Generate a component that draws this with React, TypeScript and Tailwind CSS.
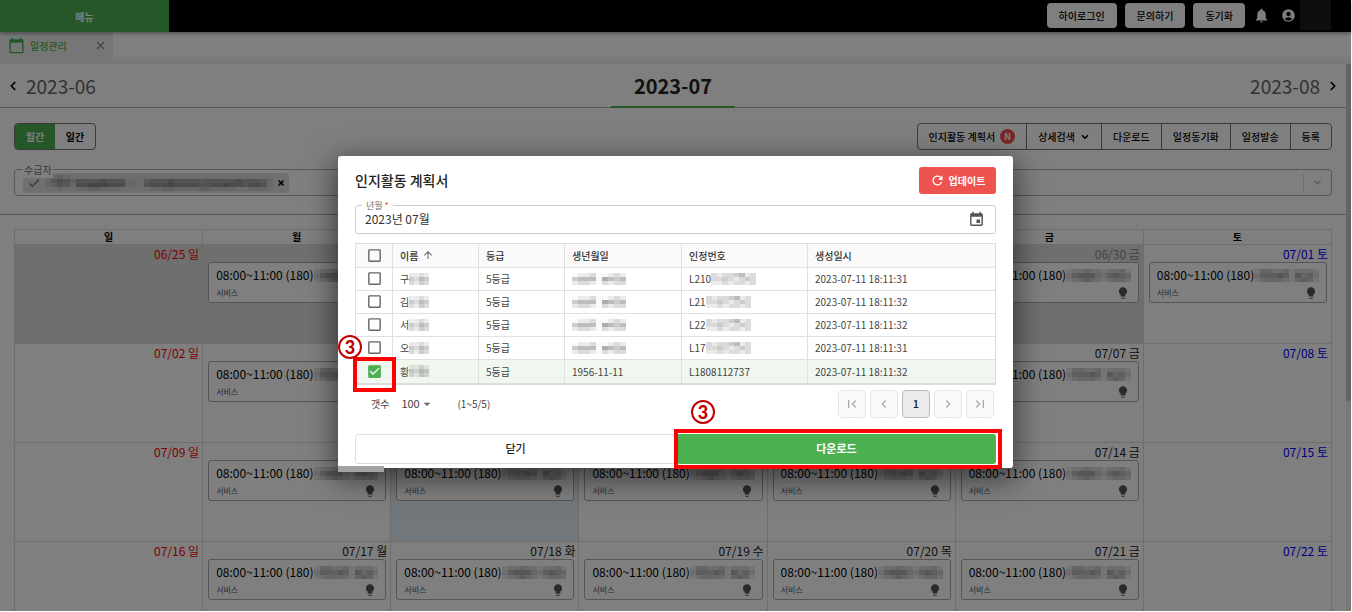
import React from 'react';
import clsx from 'clsx';
import { ChevronDown, ChevronLeft, ChevronRight, X } from 'lucide-react';
import {
  MdAccountCircle,
  MdArrowDropDown,
  MdArrowUpward,
  MdCalendarToday,
  MdCheck,
  MdCheckBox,
  MdCheckBoxOutlineBlank,
  MdChevronLeft,
  MdChevronRight,
  MdClose,
  MdEvent,
  MdFirstPage,
  MdLastPage,
  MdLightbulb,
  MdNotifications,
  MdRefresh,
} from 'react-icons/md';

interface DayCell {
  date: string;
  event?: boolean;
  outside?: boolean;
  today?: boolean;
}

interface PlanRow {
  name: string;
  birth?: string;
  number: string;
  masked: boolean;
  created: string;
  checked: boolean;
}

const WEEKDAYS = ['일', '월', '화', '수', '목', '금', '토'];

const WEEKS: DayCell[][] = [
  [
    { date: '06/25', outside: true },
    { date: '06/26', outside: true, event: true },
    { date: '06/27', outside: true },
    { date: '06/28', outside: true },
    { date: '06/29', outside: true },
    { date: '06/30', outside: true, event: true },
    { date: '07/01', event: true },
  ],
  [
    { date: '07/02' },
    { date: '07/03', event: true },
    { date: '07/04' },
    { date: '07/05' },
    { date: '07/06' },
    { date: '07/07', event: true },
    { date: '07/08' },
  ],
  [
    { date: '07/09' },
    { date: '07/10', event: true },
    { date: '07/11', event: true, today: true },
    { date: '07/12', event: true },
    { date: '07/13', event: true },
    { date: '07/14', event: true },
    { date: '07/15' },
  ],
  [
    { date: '07/16' },
    { date: '07/17', event: true },
    { date: '07/18', event: true },
    { date: '07/19', event: true },
    { date: '07/20', event: true },
    { date: '07/21', event: true },
    { date: '07/22' },
  ],
];

const ROWS: PlanRow[] = [
  { name: '구', number: 'L210', masked: true, created: '2023-07-11 18:11:31', checked: false },
  { name: '김', number: 'L21', masked: true, created: '2023-07-11 18:11:32', checked: false },
  { name: '서', number: 'L22', masked: true, created: '2023-07-11 18:11:32', checked: false },
  { name: '오', number: 'L17', masked: true, created: '2023-07-11 18:11:31', checked: false },
  { name: '황', birth: '1956-11-11', number: 'L1808112737', masked: false, created: '2023-07-11 18:11:32', checked: true },
];

// one digit per block, higher is darker
const MASKS = {
  eventA: ['12232212231', '24555324543', '12343212332'],
  eventB: ['13322312221', '24445415342', '12333213431'],
  recipient: [
    '0121000000000000000000000000000000000',
    '1354244445444110344454444344444544431',
    '1243155666555110455565555445565545541',
    '0010011221110000011221111221111001110',
  ],
  name: ['1121', '3243', '2132'],
  birth: ['011200121', '344405434', '122102122'],
  number: ['21223412', '22321232', '11212212'],
};

const Mosaic: React.FC<{ kind: keyof typeof MASKS; className: string }> = ({ kind, className }) => {
  const rows = MASKS[kind];
  return (
    <svg
      aria-hidden
      viewBox={`0 0 ${rows[0].length} ${rows.length}`}
      preserveAspectRatio="none"
      shapeRendering="crispEdges"
      className={className}
    >
      {rows.map((row, y) =>
        row.split('').map((v, x) => (
          <rect key={`${x}-${y}`} x={x} y={y} width="1" height="1" fillOpacity={0.02 + Number(v) * 0.06} />
        ))
      )}
    </svg>
  );
};

const Header = () => (
  <header className="relative z-10 flex h-8 shrink-0 items-center bg-black pb-px shadow-[0_2px_3px_rgba(0,0,0,0.3)]">
    <button className="h-8 w-[169px] self-start bg-[#4caf50] text-[10px] font-bold text-white">메뉴</button>
    <div className="ml-auto flex items-center gap-2">
      {['하이로그인', '문의하기', '동기화'].map(label => (
        <button key={label} className="h-[25px] rounded-sm bg-white px-3 text-[10px] font-medium text-black">
          {label}
        </button>
      ))}
    </div>
    <button aria-label="알림" className="ml-2 text-white"><MdNotifications size={17} /></button>
    <button aria-label="계정" className="ml-[11px] text-white"><MdAccountCircle size={15} /></button>
    <div className="mr-5 ml-1 h-[30px] w-[31px] self-start bg-[#1c1c1c]" />
  </header>
);

const TabBar = () => (
  <div className="flex h-8 shrink-0 bg-[#f2f2f2]">
    <div className="flex w-[113px] items-center bg-[#ececec] pb-[6px] pl-2 text-[#4caf50]">
      <MdCalendarToday size={17} />
      <span className="ml-[5px] text-[10px] font-medium">일정관리</span>
      <button aria-label="탭 닫기" className="mr-[6px] ml-auto text-[#777]"><MdClose size={13} /></button>
    </div>
    <div className="h-[25px] flex-1 bg-white" />
  </div>
);

const MonthNav = () => (
  <div className="grid h-11 grid-cols-3 border-b border-[#b0b0b0] text-[19px] leading-[44px] text-[#666]">
    <button className="flex items-center gap-[6px] pl-[6px]">
      <ChevronLeft size={14} strokeWidth={3} className="text-black" />
      2023-06
    </button>
    <div className="flex justify-center">
      <h1 className="h-11 w-[124px] border-b-2 border-[#4caf50] text-center text-[20px] font-bold text-[#222]">2023-07</h1>
    </div>
    <button className="flex items-center justify-end gap-[6px] pr-[6px]">
      2023-08
      <ChevronRight size={14} strokeWidth={3} className="text-black" />
    </button>
  </div>
);

const Toolbar = () => (
  <div className="flex h-[27px] justify-between text-[10px] font-medium text-black">
    <div className="flex rounded-sm border border-[#777]">
      <button className="w-10 bg-[#4caf50] font-bold text-white">월간</button>
      <button className="w-10 font-bold">일간</button>
    </div>
    <div className="flex divide-x divide-[#777] rounded-sm border border-[#777]">
      <button className="flex items-center gap-[5px] px-[11px]">
        인지활동 계획서
        <span className="size-[15px] rounded-full bg-[#ef5350] text-center text-[9px] leading-[15px] font-bold text-white">N</span>
      </button>
      <button className="flex items-center gap-[5px] px-[11px]">
        상세검색
        <ChevronDown size={10} strokeWidth={4} />
      </button>
      {['다운로드', '일정동기화', '일정발송', '등록'].map(label => (
        <button key={label} className="px-[11px]">{label}</button>
      ))}
    </div>
  </div>
);

const RecipientSelect = () => (
  <div className="relative mt-[19px] flex h-[27px] items-center rounded-sm border border-[#b0b0b0] pl-2">
    <span className="absolute -top-2 left-2 bg-white px-px text-[10px] leading-4 text-[#777]">수급자</span>
    <div className="flex h-5 w-[266px] items-center rounded-sm bg-[#e0e0e0] px-1">
      <MdCheck size={14} className="text-[#2e7d32]" />
      <Mosaic kind="recipient" className="ml-1 h-4 w-[228px]" />
      <button aria-label="삭제" className="ml-auto text-black"><X size={8} strokeWidth={5} /></button>
    </div>
    <button aria-label="수급자 선택" className="ml-auto flex h-[18px] items-center border-l border-[#ddd] px-2 text-[#aaa]">
      <ChevronDown size={11} strokeWidth={3} />
    </button>
  </div>
);

const EventCard: React.FC<{ kind: 'eventA' | 'eventB' }> = ({ kind }) => (
  <article className="mr-1 ml-[5px] h-[41px] rounded-[3px] border border-[#aaa] bg-white px-[7px] pt-[3px]">
    <div className="flex h-[18px] items-center text-[12px] whitespace-nowrap text-black">
      08:00~11:00 (180)
      <Mosaic kind={kind} className="h-[13px] min-w-0 flex-1" />
    </div>
    <div className="flex h-[17px] items-center justify-between pr-px text-[8px] text-[#405a72]">
      서비스
      <MdLightbulb size={14} className="text-[#555]" />
    </div>
  </article>
);

const Calendar = () => (
  <table className="mt-[14px] w-full table-fixed border-collapse">
    <thead>
      <tr className="h-[15px] text-[10px] leading-[14px] text-black">
        {WEEKDAYS.map(day => (
          <th key={day} className="border border-[#dcdcdc] p-0 font-bold">{day}</th>
        ))}
      </tr>
    </thead>
    <tbody>
      {WEEKS.map((week, w) => (
        <tr key={w} className="h-[99px] align-top">
          {week.map((cell, d) => (
            <td
              key={cell.date}
              className={clsx('border border-[#dcdcdc] p-0', cell.outside && 'bg-[#dedede]', cell.today && 'bg-[#e2eff6]')}
            >
              <p
                className={clsx(
                  'pr-[3px] text-right text-[12px] leading-[17px]',
                  d === 0 && 'text-[#f00]',
                  d === 6 && 'text-[#00f]',
                  d > 0 && d < 6 && (cell.outside ? 'text-[#888]' : 'text-[#222]')
                )}
              >
                {cell.date} {WEEKDAYS[d]}
              </p>
              {cell.event && <EventCard kind={(d + w) % 2 ? 'eventA' : 'eventB'} />}
            </td>
          ))}
        </tr>
      ))}
    </tbody>
  </table>
);

const Checkbox: React.FC<{ label: string; checked: boolean; onChange: () => void }> = ({ label, checked, onChange }) => (
  <span className="relative mx-auto block size-[17px]">
    <input
      type="checkbox"
      aria-label={label}
      checked={checked}
      onChange={onChange}
      className="absolute inset-0 size-full appearance-none"
    />
    {checked
      ? <MdCheckBox size={17} className="text-[#4caf50]" />
      : <MdCheckBoxOutlineBlank size={17} className="text-[#666]" />}
  </span>
);

const StepBadge: React.FC<{ className: string }> = ({ className }) => (
  <span
    className={clsx(
      'absolute size-6 rounded-full border-2 border-[#c00000] bg-white text-center font-[Lato,sans-serif] text-[18px] leading-5 font-black text-[#c00000]',
      className
    )}
  >
    3
  </span>
);

const PlanTable = () => {
  const [checked, setChecked] = React.useState(() => ROWS.map(row => row.checked));
  const toggle = (i: number) => setChecked(prev => prev.map((v, n) => (n === i ? !v : v)));
  const all = checked.every(Boolean);

  return (
    <table className="mt-[9px] w-full table-fixed border-separate border-spacing-0 border border-b-2 border-[#ddd] text-left text-[10px] text-[#444]">
      <colgroup>
        <col className="w-[37px]" />
        <col className="w-[86px]" />
        <col className="w-[86px]" />
        <col className="w-[117px]" />
        <col className="w-[126px]" />
        <col />
      </colgroup>
      <thead>
        <tr className="h-6 bg-[#fafafa] text-[#333] [&>th]:border-r [&>th]:border-b [&>th]:border-[#e0e0e0] [&>th:last-child]:border-r-0">
          <th className="p-0"><Checkbox label="전체 선택" checked={all} onChange={() => setChecked(ROWS.map(() => !all))} /></th>
          <th className="py-0 pr-0 pl-[7px] font-medium">
            <span className="flex items-center gap-1">이름 <MdArrowUpward size={12} className="text-[#666]" /></span>
          </th>
          <th className="py-0 pr-0 pl-[7px] font-medium">등급</th>
          <th className="py-0 pr-0 pl-[7px] font-medium">생년월일</th>
          <th className="py-0 pr-0 pl-[7px] font-medium">인정번호</th>
          <th className="py-0 pr-0 pl-[7px] font-medium">생성일시</th>
        </tr>
      </thead>
      <tbody>
        {ROWS.map((row, i) => (
          <tr
            key={row.name}
            className={clsx(
              'h-[23px] [&>td]:border-r [&>td]:border-[#e0e0e0] [&>td:last-child]:border-r-0',
              i < ROWS.length - 1 && '[&>td]:border-b',
              checked[i] && 'bg-[#eff7ef]'
            )}
          >
            <td className="relative p-0">
              <Checkbox label={row.name} checked={checked[i]} onChange={() => toggle(i)} />
              {i === ROWS.length - 1 && (
                <>
                  <span className="pointer-events-none absolute -top-[3px] -left-[3px] h-[35px] w-[43px] border-4 border-[#f00]" />
                  <StepBadge className="-top-[25px] -left-[18px]" />
                </>
              )}
            </td>
            <td className="py-0 pr-0 pl-[7px]">
              <span className="flex items-center">{row.name}<Mosaic kind="name" className="h-3 w-5" /></span>
            </td>
            <td className="py-0 pr-0 pl-[7px]">5등급</td>
            <td className="py-0 pr-0 pl-[7px]">
              {row.birth ?? <Mosaic kind="birth" className="h-3 w-[54px]" />}
            </td>
            <td className="py-0 pr-0 pl-[7px]">
              <span className="flex items-center">
                {row.number}
                {row.masked && <Mosaic kind="number" className="h-3 w-[45px]" />}
              </span>
            </td>
            <td className="py-0 pr-0 pl-[7px]">{row.created}</td>
          </tr>
        ))}
      </tbody>
    </table>
  );
};

const Pager = () => {
  const base = 'flex size-7 items-center justify-center rounded-sm border';
  const idle = 'border-[#e6e6e6] bg-[#fafafa] text-[#aaa]';
  return (
    <div className="mt-[5px] flex items-center pr-[2px] pl-4 text-[10px] text-[#444]">
      <label htmlFor="page-size">갯수</label>
      <span className="relative ml-3 flex items-center text-[11px]">
        <select id="page-size" className="w-[30px] appearance-none bg-transparent" defaultValue="100">
          <option>100</option>
        </select>
        <MdArrowDropDown size={16} className="pointer-events-none absolute left-[18px] text-[#666]" />
      </span>
      <span className="ml-[26px]">(1~5/5)</span>
      <nav aria-label="페이지" className="ml-auto flex gap-1">
        <button aria-label="처음" className={clsx(base, idle)}><MdFirstPage size={16} /></button>
        <button aria-label="이전" className={clsx(base, idle)}><MdChevronLeft size={16} /></button>
        <button className={clsx(base, 'border-[#bbb] bg-[#ebebeb] text-[11px] font-medium text-[#222]')}>1</button>
        <button aria-label="다음" className={clsx(base, idle)}><MdChevronRight size={16} /></button>
        <button aria-label="마지막" className={clsx(base, idle)}><MdLastPage size={16} /></button>
      </nav>
    </div>
  );
};

const PlanDialog = () => (
  <section
    role="dialog"
    aria-labelledby="plan-title"
    className="relative w-full max-w-[675px] rounded-[3px] bg-white px-[17px] pt-[11px] pb-1 shadow-[0_8px_28px_4px_rgba(0,0,0,0.5)]"
  >
    <div className="flex items-center justify-between">
      <h2 id="plan-title" className="text-[14px] font-medium text-[#222]">인지활동 계획서</h2>
      <button className="flex h-[27px] w-[77px] items-center justify-center gap-1 rounded-[3px] bg-[#ef5350] text-[10px] font-bold text-white">
        <MdRefresh size={15} />
        업데이트
      </button>
    </div>

    <div className="relative mt-[11px] flex h-[29px] items-center rounded-[3px] border border-[#ccc] pr-[10px] pl-[9px]">
      <label htmlFor="plan-month" className="absolute -top-2 left-[6px] bg-white px-1 text-[9px] leading-4 text-[#777]">
        년월 <span className="text-[#f44336]">*</span>
      </label>
      <input id="plan-month" defaultValue="2023년 07월" className="min-w-0 flex-1 text-[12px] text-[#333] outline-none" />
      <button aria-label="달력 열기" className="text-[#555]"><MdEvent size={17} /></button>
    </div>

    <PlanTable />
    <Pager />

    <div className="relative mt-4 flex h-[30px]">
      <button className="flex-1 rounded-[3px] border border-[#ddd] text-[11px] font-medium text-[#222]">닫기</button>
      <button className="ml-px flex-1 rounded-[3px] bg-[#4caf50] text-[11px] font-bold text-white">다운로드</button>
      <span className="pointer-events-none absolute -top-[5px] -right-[6px] h-10 w-[328px] border-4 border-[#f00]" />
      <StepBadge className="-top-[34px] left-[336px]" />
    </div>
    <span className="absolute -bottom-1 left-0 h-[6px] w-[46px] bg-[#a3a3a3]" />
  </section>
);

export default function App() {
  return (
    <div className="relative h-screen overflow-hidden bg-white pr-px pb-px font-['Noto_Sans_CJK_KR',sans-serif]">
      <div className="flex h-full flex-col">
        <Header />
        <TabBar />
        <div className="flex min-h-0 flex-1">
          <main className="min-w-0 flex-1 overflow-hidden">
            <MonthNav />
            <div className="border-b border-[#b0b0b0] px-[14px] pt-[15px] pb-[18px]">
              <Toolbar />
              <RecipientSelect />
            </div>
            <div className="px-[14px]">
              <Calendar />
            </div>
          </main>
          <div className="w-[5px] bg-[#f0f0f0]">
            <div className="h-[337px] rounded-b-sm bg-[#c8c8c8]" />
          </div>
        </div>
      </div>

      <div className="absolute inset-0 right-px bottom-px z-20 flex items-center justify-center bg-black/50 pt-3">
        <PlanDialog />
      </div>
    </div>
  );
}
